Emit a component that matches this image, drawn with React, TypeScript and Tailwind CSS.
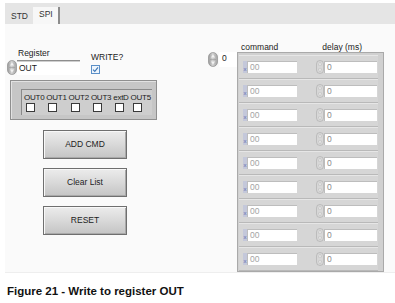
import React from "react";

const rows = Array.from({ length: 9 }, (_, i) => i);
const bits = ["OUT0", "OUT1", "OUT2", "OUT3", "extD", "OUT5"];

function Spinner() {
  return (
    <svg width="10" height="15" viewBox="0 0 10 15" className="shrink-0">
      <defs>
        <linearGradient id="spg" x1="0" x2="1" y1="0" y2="0">
          <stop offset="0" stopColor="#9a9a9a" />
          <stop offset="0.45" stopColor="#d2d2d2" />
          <stop offset="1" stopColor="#a4a4a4" />
        </linearGradient>
      </defs>
      <rect x="0.5" y="0.5" width="9" height="14" rx="4.5" fill="url(#spg)" stroke="#858585" strokeWidth="0.6" />
      <path d="M5 2.3 L7 5.6 L3 5.6 Z" fill="#f2f2f2" />
      <path d="M5 12.7 L7 9.4 L3 9.4 Z" fill="#f2f2f2" />
      <line x1="2" y1="7.5" x2="8" y2="7.5" stroke="#909090" strokeWidth="0.5" />
    </svg>
  );
}

function SmallSpinner() {
  return (
    <svg width="8" height="14" viewBox="0 0 8 14" className="shrink-0">
      <rect x="0.5" y="0.5" width="7" height="13" rx="3.5" fill="#d7d7d7" stroke="#aaaaaa" strokeWidth="0.6" />
      <path d="M4 2 L5.6 5 L2.4 5 Z" fill="#f4f4f4" stroke="#a8a8a8" strokeWidth="0.4" />
      <path d="M4 12 L5.6 9 L2.4 9 Z" fill="#f4f4f4" stroke="#a8a8a8" strokeWidth="0.4" />
    </svg>
  );
}

function Btn({ label }: { label: string }) {
  return (
    <button className="h-[29px] w-[84px] border border-[#6f6f6f] bg-gradient-to-b from-[#ececec] via-[#d9d9d9] to-[#c4c4c4] text-[8.5px] text-[#222] shadow-[inset_1px_1px_0_#f8f8f8,inset_-1px_-1px_0_#a9a9a9]">
      {label}
    </button>
  );
}

function ArrayRow() {
  return (
    <div className="flex h-[24px] items-center border-b border-[#b9b9b9] bg-[#d6d6d6] pl-[4px] shadow-[inset_0_1px_0_#e6e6e6]">
      <div className="flex h-[12px] w-[4px] items-end justify-center bg-[#c4c8da] pb-[1px] text-[6px] leading-none text-[#5f6db0]">
        x
      </div>
      <div className="flex h-[12px] w-[50px] items-center border-t border-l border-[#bdbdbd] bg-white pl-[2px] text-[8.5px] leading-none text-[#a4a4a4]">
        00
      </div>
      <div className="ml-[19px] flex items-center">
        <SmallSpinner />
      </div>
      <div className="flex h-[12px] w-[53px] items-center border-t border-l border-[#bdbdbd] bg-white pl-[2px] text-[8.5px] leading-none text-[#8a8a8a]">
        0
      </div>
    </div>
  );
}

export default function App() {
  return (
    <div className="h-[303px] w-[395px] overflow-hidden bg-white font-['Liberation_Sans',Arial,sans-serif] text-[#1c1c1c]">
      <div className="pl-[5px] pt-[3px]">
        {/* tab strip */}
        <div className="flex h-[21px] items-end bg-[#e5e5e5]">
          <div className="flex h-[16px] items-center pl-[6px] pr-[5px] text-[8.5px] leading-none text-[#333]">
            STD
          </div>
          <div className="flex h-[17px] w-[27px] items-center border-r-2 border-[#8c8c8c] bg-[#f7f7f7] pb-[2px] pl-[6px] text-[8.5px] leading-none text-[#333]">
            SPI
          </div>
        </div>

        {/* front panel */}
        <div className="flex h-[249px] border-b border-[#eeeeee] bg-[#fafafa]">
          {/* left column */}
          <div className="flex w-[200px] flex-col">
            <div className="mt-[23px] flex">
              <div className="ml-[2px] flex flex-col">
                <span className="pl-[11px] text-[8.5px] leading-[12px]">Register</span>
                <div className="mt-[1px] flex items-center">
                  <Spinner />
                  <div className="flex h-[15px] w-[63px] items-center border-t border-[#8e8e8e] bg-white pl-[2px] text-[8.5px] leading-none shadow-[inset_0_1px_0_#cfcfcf]">
                    OUT
                  </div>
                </div>
              </div>
              <div className="ml-[11px] mt-[5px] flex flex-col">
                <span className="text-[8.5px] leading-[10px]">WRITE?</span>
                <div className="mt-[3px] flex h-[9px] w-[9px] items-center justify-center border border-[#5b8fc7] bg-[#eef5fc]">
                  <svg width="7" height="7" viewBox="0 0 7 7">
                    <path d="M1 3.6 L2.8 5.4 L6 1.4" fill="none" stroke="#3c76b5" strokeWidth="1.1" />
                  </svg>
                </div>
              </div>
            </div>

            {/* cluster */}
            <div className="ml-[5px] mt-[5px] h-[40px] w-[147px] border border-[#8f8f8f] bg-[#c6c6c6] pb-[4px] pl-[10px] pr-[4px] pt-[8px] shadow-[inset_1px_1px_0_#e2e2e2]">
              <div className="flex h-full items-start justify-between border-t border-l border-[#8a8a8a] bg-[#cecece] pl-[2px] pr-[1px] pt-[2px]">
                {bits.map((b) => (
                  <div key={b} className="flex flex-col items-start">
                    <span className="text-[8px] leading-[11px] tracking-[-0.25px]">{b}</span>
                    <div className="ml-[2px] h-[9px] w-[9px] border border-[#3a3a3a] bg-white" />
                  </div>
                ))}
              </div>
            </div>

            {/* buttons */}
            <div className="ml-[38px] mt-[10px] flex flex-col gap-[9px]">
              <Btn label="ADD CMD" />
              <Btn label="Clear List" />
              <Btn label="RESET" />
            </div>
          </div>

          {/* right column */}
          <div className="flex">
            <div className="ml-[3px] mt-[28px] flex h-[16px] w-[29px] items-start">
              <Spinner />
              <div className="ml-[1px] flex h-[15px] w-[18px] items-start bg-white pl-[3px] pt-[2px] text-[8.5px] leading-none">
                0
              </div>
            </div>
            <div className="flex flex-col">
              <div className="flex h-[31px] items-end pb-[1px] text-[8.5px] leading-none">
                <span className="ml-[4px]">command</span>
                <span className="ml-[44px]">delay (ms)</span>
              </div>
              <div className="w-[147px] flex-1 border border-[#a9a9a9] bg-[#d0d0d0] pl-[1px] pr-[5px] pt-[2px]">
                {rows.map((r) => (
                  <ArrayRow key={r} />
                ))}
              </div>
            </div>
          </div>
        </div>
      </div>

      <p className="ml-[7px] mt-[13px] font-['Liberation_Sans',Arial,sans-serif] text-[11.5px] font-bold leading-none text-[#111]">
        Figure 21 - Write to register OUT
      </p>
    </div>
  );
}
